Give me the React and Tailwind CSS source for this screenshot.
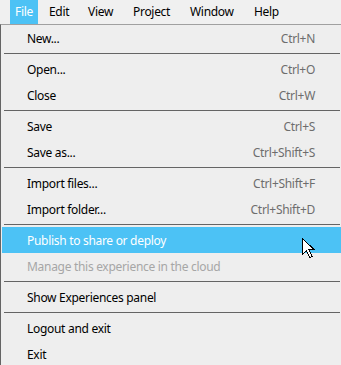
import React from "react";

const font = { fontFamily: '"Segoe UI", "Noto Sans", "Open Sans", sans-serif' };

const groups = [
  [{ label: "New...", sc: "Ctrl+N" }],
  [
    { label: "Open...", sc: "Ctrl+O" },
    { label: "Close", sc: "Ctrl+W" },
  ],
  [
    { label: "Save", sc: "Ctrl+S" },
    { label: "Save as...", sc: "Ctrl+Shift+S" },
  ],
  [
    { label: "Import files...", sc: "Ctrl+Shift+F" },
    { label: "Import folder...", sc: "Ctrl+Shift+D" },
  ],
  [
    { label: "Publish to share or deploy", active: true },
    { label: "Manage this experience in the cloud", disabled: true },
  ],
  [{ label: "Show Experiences panel" }],
  [{ label: "Logout and exit" }, { label: "Exit" }],
];

function Item({ item }) {
  const base =
    "relative flex items-center justify-between h-[26px] pl-[25px] pr-[26px] text-[12px] tracking-[-0.3px]";
  const bg = item.active ? "bg-[#4cc2f5]" : "";
  const color = item.active ? "text-white" : item.disabled ? "text-[#a6a6a6]" : "text-black";
  return (
    <div className={`${base} ${bg} ${color}`}>
      <span className="pt-[1px]">{item.label}</span>
      {item.sc && <span className="pt-[1px] text-[#6d6d6d]">{item.sc}</span>}
      {item.active && (
        <svg
          className="absolute left-[300px] top-[11px]"
          width="14"
          height="21"
          viewBox="0 0 14 21"
        >
          <path
            d="M0.5 0.5 L0.5 16.5 L4.5 12.5 L7.5 19.5 L10 18.5 L7 11.5 L12 11.5 Z"
            fill="white"
            stroke="black"
            strokeWidth="1"
            shapeRendering="crispEdges"
          />
        </svg>
      )}
    </div>
  );
}

export default function App() {
  return (
    <div className="w-[341px] h-[365px] overflow-hidden bg-[#eeeeee]" style={font}>
      <div className="flex h-[24px] items-stretch bg-[#f0f0f0] text-[12px] tracking-[-0.3px] text-black">
        <div className="ml-[10px] flex w-[28px] items-center justify-center bg-[#4cc2f5] text-white">File</div>
        <div className="flex w-[50px] items-center pl-[11px]">Edit</div>
        <div className="flex w-[45px] items-center">View</div>
        <div className="flex w-[57px] items-center">Project</div>
        <div className="flex w-[64px] items-center">Window</div>
        <div className="flex items-center">Help</div>
      </div>
      <div className="w-[341px] border-t border-l border-t-[#a0a0a0] border-l-[#646464] bg-[#eeeeee] pl-[1px]">
        {groups.map((g, gi) => (
          <div key={gi}>
            {gi > 0 && <div className="my-[2px] ml-[2px] mr-[1px] h-px bg-[#646464]" />}
            {g.map((it, ii) => (
              <Item key={ii} item={it} />
            ))}
          </div>
        ))}
      </div>
    </div>
  );
}
